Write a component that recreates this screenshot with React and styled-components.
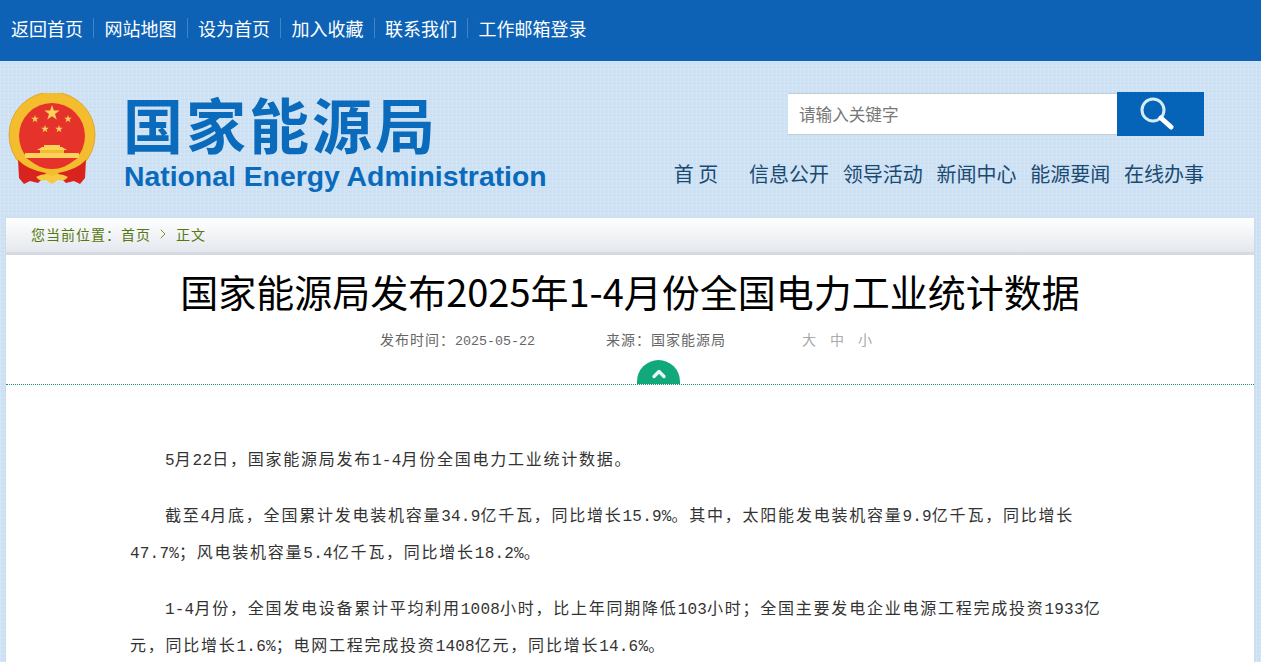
import React from "react";
import styled, { createGlobalStyle } from "styled-components";
import { ChevronRight, ChevronUp } from "lucide-react";

const GlobalStyle = createGlobalStyle`
  html, body {
    margin: 0;
    height: 662px;
    overflow: hidden;
  }
  body {
    font-family: "Noto Sans CJK SC", "Liberation Sans", sans-serif;
    background-color: #cce0f4;
    background-image:
      repeating-linear-gradient(0deg, rgba(255,255,255,.14) 0 1px, transparent 1px 4px),
      repeating-linear-gradient(90deg, rgba(255,255,255,.14) 0 1px, transparent 1px 4px);
  }
`;

const TopBar = styled.div`
  height: 61px;
  background: #0e62b6;
  display: flex;
  align-items: center;
  padding: 0 0 5px 0;
  box-sizing: border-box;
`;

const TopLink = styled.a`
  color: #fff;
  font-size: 18px;
  line-height: 20px;
  padding: 0 10.25px;
  border-left: 1px solid #3f83c9;
  &:first-child { border-left: 0; padding-left: 11px; }
`;

const Header = styled.header`
  height: 157px;
  box-sizing: border-box;
  padding: 31px 57px 0 8px;
  display: flex;
  justify-content: space-between;
`;

const Logo = styled.div`
  display: flex;
  gap: 27px;
`;

const LogoText = styled.div`
  display: flex;
  flex-direction: column;
  color: #0a6abb;
  margin-top: -4px;
`;

const LogoCn = styled.div`
  font-size: 60px;
  line-height: 70px;
  font-weight: 700;
  letter-spacing: 3px;
  white-space: nowrap;
`;

const LogoEn = styled.div`
  font-family: "Liberation Sans", sans-serif;
  font-size: 28.35px;
  line-height: 32px;
  margin: 2px 0 0 1px;
  font-weight: 700;
  white-space: nowrap;
`;

const HeaderRight = styled.div`
  display: flex;
  flex-direction: column;
  align-items: flex-end;
`;

const Search = styled.form`
  display: flex;
  align-items: center;
  margin: 0;
`;

const SearchInput = styled.input`
  width: 329px;
  height: 42px;
  box-sizing: border-box;
  border: 0;
  border-bottom: 1px solid #c6ccd4;
  border-top: 1px solid #c6ccd4;
  padding: 0 11px;
  font-family: inherit;
  font-size: 16.6px;
  background: #fff;
  outline: none;
  &::placeholder { color: #777; opacity: 1; }
`;

const SearchButton = styled.button`
  width: 87px;
  height: 44px;
  border: 0;
  padding: 0 9px 0 0;
  background: #0563b8;
  display: flex;
  align-items: center;
  justify-content: center;
`;

const MainNav = styled.nav`
  display: flex;
  gap: 13.75px;
  margin-top: 23px;
`;

const NavItem = styled.a`
  color: #1a4a72;
  font-size: 20px;
  line-height: 30px;
  white-space: nowrap;
  margin-right: ${(p) => (p.$wide ? "17px" : "0")};
`;

const Panel = styled.main`
  width: 1248px;
  margin-left: 6px;
  background: #fff;
  height: 444px;
  overflow: hidden;
  box-shadow: 0 0 2px #c4d2e0;
`;

const Crumbs = styled.div`
  height: 37px;
  box-sizing: border-box;
  border-bottom: 3px solid #d6dae3;
  background: linear-gradient(#fff, #e4e8ee);
  padding: 0 0 2px 25px;
  display: flex;
  align-items: center;
  color: #55790f;
  font-size: 14px;
  letter-spacing: 1px;
  white-space: nowrap;
`;

const CrumbSep = styled.span`
  display: flex;
  margin: 0 5px 0 4px;
  color: #55790f;
`;

const Title = styled.h1`
  margin: 9px 0 0;
  font-size: 38px;
  line-height: 54px;
  font-weight: 400;
  color: #000;
  text-align: center;
  white-space: nowrap;
`;

const Meta = styled.div`
  display: flex;
  justify-content: center;
  align-items: baseline;
  height: 22px;
  margin-top: 11px;
  padding-right: 7px;
  color: #666;
  font-size: 14px;
  letter-spacing: 1px;
  white-space: nowrap;
`;

const MetaDate = styled.span`
  font-family: "Liberation Mono", monospace;
  font-size: 13.33px;
  letter-spacing: 0;
`;

const MetaSource = styled.span`
  margin-left: 71px;
`;

const SizeSwitch = styled.span`
  display: flex;
  gap: 13px;
  margin-left: 76px;
  color: #aaa;
`;

const Divider = styled.div`
  position: relative;
  height: 33px;
  border-bottom: 1px dotted #1f8f70;
`;

const Collapse = styled.span`
  position: absolute;
  left: 631px;
  bottom: 0;
  width: 43px;
  height: 24px;
  border-radius: 22px 22px 0 0;
  background: #11a97c;
  color: #e8f7f2;
  display: flex;
  justify-content: center;
  align-items: flex-start;
  padding-top: 4px;
  box-sizing: border-box;
`;

const Article = styled.article`
  width: 985px;
  margin: 55px 0 0 124px;
  color: #333;
  font-size: 16px;
  line-height: 37px;
  letter-spacing: 1.76px;
`;

const Para = styled.p`
  margin: 0 0 19px;
  text-indent: 35px;
`;

const Num = styled.span`
  font-family: "Liberation Mono", monospace;
  letter-spacing: 0.2px;
  line-height: 1;
`;

function Emblem() {
  const star = (cx, cy, r) => {
    const pts = [];
    for (let i = 0; i < 10; i++) {
      const rad = i % 2 ? r * 0.4 : r;
      const a = (Math.PI / 5) * i - Math.PI / 2;
      pts.push(`${(cx + rad * Math.cos(a)).toFixed(1)},${(cy + rad * Math.sin(a)).toFixed(1)}`);
    }
    return pts.join(" ");
  };
  return (
    <svg width="88" height="92" viewBox="8 93 88 92" style={{ flex: "none", marginTop: 1 }}>
      {/* wreath ring */}
      <circle cx="52" cy="135" r="43" fill="#f3bd2e" stroke="#e39c1c" strokeWidth="0.8" />
      <circle cx="52" cy="136" r="33" fill="#e5322a" />
      {/* gate */}
      <rect x="44" y="145" width="16" height="2" fill="#fbd35a" />
      <path d="M42 147 H62 L67 150 H37 Z" fill="#fbd35a" />
      <rect x="40" y="150" width="24" height="3" fill="#f3bd2e" />
      <rect x="25" y="153" width="54" height="5" fill="#fbd35a" />
      <path d="M26 158 H78 Q66 166 52 166 Q38 166 26 158 Z" fill="#e5322a" />
      {/* ribbons */}
      <path d="M18 160 Q28 170 46 173 L44 177 L38 183 L30 181 L24 184 L19 178 Z" fill="#d8231f" />
      <path d="M86 160 Q76 170 58 173 L60 177 L66 183 L74 181 L80 184 L85 178 Z" fill="#d8231f" />
      {/* knot */}
      <path d="M36 177 Q44 172 52 176 Q60 172 68 177 Q64 182 58 180 L52 184 L46 180 Q40 182 36 177 Z" fill="#f7c93f" />
      {/* stars */}
      <polygon points={star(52, 113, 8)} fill="#fbd35a" />
      <polygon points={star(35, 119, 4)} fill="#fbd35a" />
      <polygon points={star(68, 119, 4)} fill="#fbd35a" />
      <polygon points={star(45, 129, 4)} fill="#fbd35a" />
      <polygon points={star(59, 129, 4)} fill="#fbd35a" />
    </svg>
  );
}

function SearchIcon() {
  return (
    <svg width="36" height="36" viewBox="0 0 36 36">
      <circle cx="15" cy="14" r="11" fill="none" stroke="#d6ebf5" strokeWidth="3" />
      <path d="M23 22 L33 31" stroke="#fff" strokeWidth="5" strokeLinecap="round" />
    </svg>
  );
}

export default function App() {
  return (
    <>
      <GlobalStyle />
      <TopBar>
        <TopLink>返回首页</TopLink>
        <TopLink>网站地图</TopLink>
        <TopLink>设为首页</TopLink>
        <TopLink>加入收藏</TopLink>
        <TopLink>联系我们</TopLink>
        <TopLink>工作邮箱登录</TopLink>
      </TopBar>
      <Header>
        <Logo>
          <Emblem />
          <LogoText>
            <LogoCn>国家能源局</LogoCn>
            <LogoEn>National Energy Administration</LogoEn>
          </LogoText>
        </Logo>
        <HeaderRight>
          <Search>
            <SearchInput placeholder="请输入关键字" />
            <SearchButton type="button" aria-label="搜索">
              <SearchIcon />
            </SearchButton>
          </Search>
          <MainNav>
            <NavItem $wide>首 页</NavItem>
            <NavItem>信息公开</NavItem>
            <NavItem>领导活动</NavItem>
            <NavItem>新闻中心</NavItem>
            <NavItem>能源要闻</NavItem>
            <NavItem>在线办事</NavItem>
          </MainNav>
        </HeaderRight>
      </Header>
      <Panel>
        <Crumbs>
          您当前位置：首页
          <CrumbSep>
            <ChevronRight size={16} strokeWidth={1.2} />
          </CrumbSep>
          正文
        </Crumbs>
        <Title>国家能源局发布2025年1-4月份全国电力工业统计数据</Title>
        <Meta>
          发布时间：<MetaDate>2025-05-22</MetaDate>
          <MetaSource>来源：国家能源局</MetaSource>
          <SizeSwitch>
            <span>大</span>
            <span>中</span>
            <span>小</span>
          </SizeSwitch>
        </Meta>
        <Divider>
          <Collapse>
            <ChevronUp size={20} strokeWidth={4} />
          </Collapse>
        </Divider>
        <Article>
          <Para>
            <Num>5</Num>月<Num>22</Num>日，国家能源局发布<Num>1-4</Num>月份全国电力工业统计数据。
          </Para>
          <Para>
            截至<Num>4</Num>月底，全国累计发电装机容量<Num>34.9</Num>亿千瓦，同比增长<Num>15.9%</Num>。其中，太阳能发电装机容量<Num>9.9</Num>亿千瓦，同比增长<Num>47.7%</Num>；风电装机容量<Num>5.4</Num>亿千瓦，同比增长<Num>18.2%</Num>。
          </Para>
          <Para>
            <Num>1-4</Num>月份，全国发电设备累计平均利用<Num>1008</Num>小时，比上年同期降低<Num>103</Num>小时；全国主要发电企业电源工程完成投资<Num>1933</Num>亿元，同比增长<Num>1.6%</Num>；电网工程完成投资<Num>1408</Num>亿元，同比增长<Num>14.6%</Num>。
          </Para>
        </Article>
      </Panel>
    </>
  );
}
